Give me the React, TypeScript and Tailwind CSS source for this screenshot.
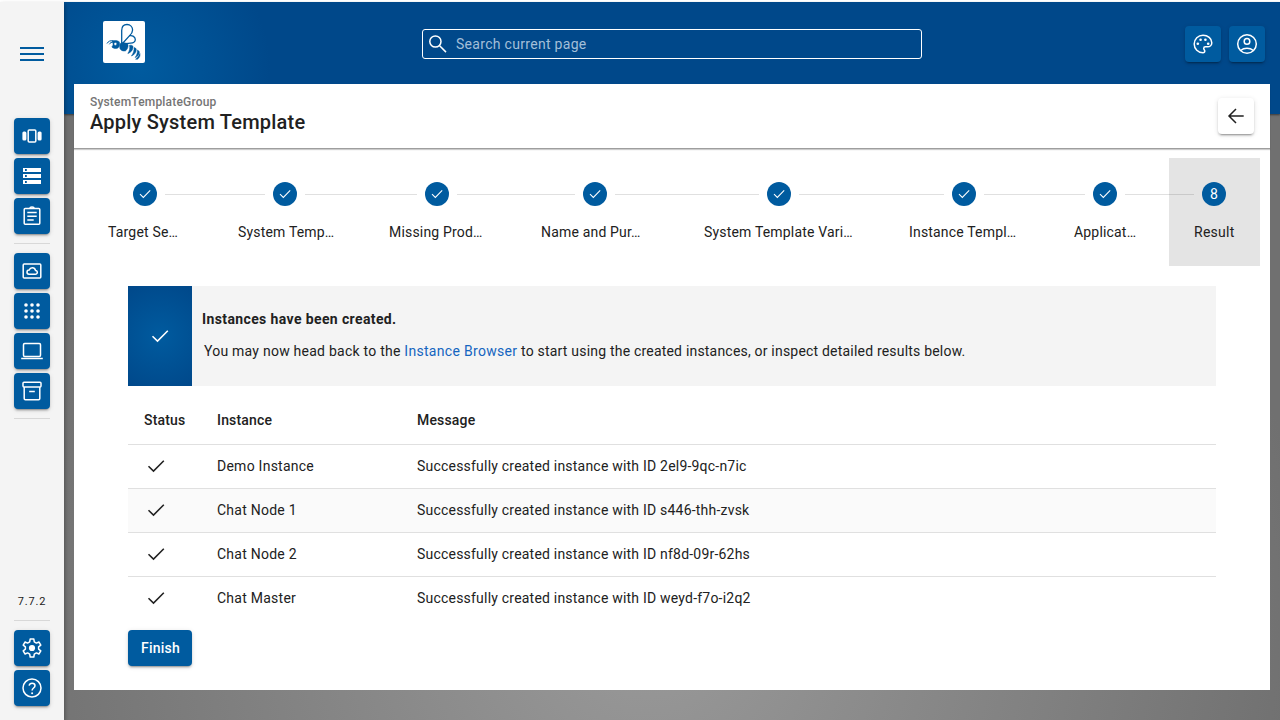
import type { ReactNode } from "react";

const steps = [
  { label: "Target Se…", w: "w-[122px]", pad: "pl-6" },
  { label: "System Temp…", w: "w-[158px]", pad: "pl-8" },
  { label: "Missing Prod…", w: "w-[146px]", pad: "pl-[25px]" },
  { label: "Name and Pur…", w: "w-[170px]", pad: "pl-[31px]" },
  { label: "System Template Vari…", w: "w-[198px]", pad: "pl-6" },
  { label: "Instance Templ…", w: "w-[172px]", pad: "pl-[31px]" },
  { label: "Applicat…", w: "w-[110px]", pad: "pl-6" },
];

const rows = [
  ["Demo Instance", "2el9-9qc-n7ic"],
  ["Chat Node 1", "s446-thh-zvsk"],
  ["Chat Node 2", "nf8d-09r-62hs"],
  ["Chat Master", "weyd-f7o-i2q2"],
];

function Check({ className }: { className: string }) {
  return (
    <svg viewBox="0 0 24 24" fill="none" stroke="currentColor" strokeWidth="1.55" className={className}>
      <path d="M4.5 12.2 9.5 17.1 19.8 6.7" />
    </svg>
  );
}

function Outline({ children }: { children: ReactNode }) {
  return (
    <svg viewBox="0 0 24 24" className="size-6" fill="none" stroke="currentColor" strokeWidth="1.5">
      {children}
    </svg>
  );
}

function IconButton({ children, white }: { children: ReactNode; white?: boolean }) {
  return (
    <button
      className={
        "flex size-9 shrink-0 items-center justify-center rounded shadow-[0_3px_1px_-2px_rgba(0,0,0,0.2),0_2px_2px_0_rgba(0,0,0,0.14),0_1px_5px_0_rgba(0,0,0,0.12)] " +
        (white ? "bg-white text-[#212121]" : "bg-[#005b9f] text-white")
      }
    >
      {children}
    </button>
  );
}

function Bee() {
  return (
    <svg viewBox="0 0 42 42" className="size-[42px] rounded-[2px] bg-white" fill="#005b9f">
      <g fill="none" stroke="#005b9f" strokeWidth="1.3">
        <path d="M18.700 23V9.500C18.700 5.500 20.700 3.500 24 3.500c3.300 0 5.600 2.400 5.600 5.500 0 2.200-1 3.700-3 5.600L19.500 22.500" />
        <path d="M26.200 14.700c3.300-.7 6.100 1.100 6.100 3.900 0 2.600-1.800 3.500-4.800 3.500l-7 .8" />
        <path d="M4 22.500c1.300-2.200 3.200-3.300 6.500-2.600M6.300 23.300c.8-1.500 2.200-2.300 4-2.200" strokeWidth="1" />
      </g>
      <g stroke="#005b9f" strokeWidth="0.5" strokeLinejoin="round">
        <path
          fillRule="evenodd"
          d="M9 20c2.500-.9 5.300-.6 7.200.7 1 2.200.6 4.600-1.200 6.200-2.200 1-4.800.7-6.200-.9 1.600-1.500 1.700-4 .2-6Zm3.300 1.400a1.500 1.500 0 1 0 .1 3 1.500 1.500 0 0 0-.1-3Z"
        />
        <path d="M17.500 22.300c2-.9 5.600-.7 7.300.8.900 2.200-.2 5.500-2.400 6.800-2.200.5-4.800-.5-5.500-2.500-.3-1.700-.2-3.600.6-5.100Z" />
        <path d="M26.500 24.300c1.400-.4 2.900.1 3.600 1.100.1 3.200-2.100 6.300-5.300 7.100 1.800-2.600 2.300-5.300 1.700-8.200Z" />
        <path d="M31.100 26.500c1 .1 1.900.8 2.200 1.800 0 2.900-1.900 5.800-4.900 6.700 2-2.600 2.800-5.400 2.700-8.500Z" />
        <path d="M34.400 29c1.200.5 1.900 1.300 2 2.300-.2 2.300-1.700 4.300-4.300 5.300 1.700-2.300 2.500-4.800 2.300-7.600Z" />
        <path d="M36.900 32.500c.5 2.100-.3 4.100-2.400 5.700h-1.900c2-1.700 3.400-3.500 4.300-5.700Z" />
      </g>
    </svg>
  );
}

function Sidebar() {
  return (
    <aside className="z-10 mt-0.5 flex w-16 shrink-0 flex-col items-center bg-[#f4f4f4] shadow-[1px_2px_4px_rgba(0,0,0,0.3)]">
      <button className="mt-[45px] flex h-[14px] w-6 flex-col justify-between text-[#005b9f]">
        <span className="h-[2px] w-6 bg-current" />
        <span className="h-[2px] w-6 bg-current" />
        <span className="h-[2px] w-6 bg-current" />
      </button>
      <nav className="mt-[57px] flex flex-col gap-1">
        <IconButton>
          <svg viewBox="0 0 24 24" className="size-6" fill="currentColor">
            <rect x="2.400" y="7.600" width="4" height="8.800" rx="1.500" />
            <rect x="17.600" y="7.600" width="4" height="8.800" rx="1.500" />
            <rect x="8.200" y="5.900" width="7.600" height="12.200" rx="1" fill="none" stroke="currentColor" strokeWidth="1.500" />
          </svg>
        </IconButton>
        <IconButton>
          <svg viewBox="0 0 24 24" className="size-6" fill="currentColor" fillRule="evenodd">
            <path d="M3 4h18v4H3zm2 1.100v1.800h1.800V5.100zM3 10h18v4H3zm2 1.100v1.800h1.800v-1.800zM3 16h18v4H3zm2 1.100v1.800h1.800v-1.800z" />
          </svg>
        </IconButton>
        <IconButton>
          <Outline>
            <rect x="4.200" y="4.600" width="15.600" height="15.600" rx="1" />
            <path d="M10 4.400a2 1.500 0 0 1 4 0M7.300 8.500h9.400M7.300 12.300h9.400M7.300 16h6.400" />
          </Outline>
        </IconButton>
      </nav>
      <hr className="mt-[9px] h-px w-9 border-0 bg-[#d8d8d8]" />
      <nav className="mt-[9px] flex flex-col gap-1">
        <IconButton>
          <Outline>
            <rect x="3.200" y="5" width="17.600" height="14" rx="1" />
            <path d="M9 15.200h6.300a1.900 1.900 0 0 0 .2-3.800c-.4-1.600-1.600-2.600-3.200-2.600-1.500 0-2.600.8-3.100 2.200a2.100 2.100 0 0 0-.2 4.200Z" />
          </Outline>
        </IconButton>
        <IconButton>
          <svg viewBox="0 0 24 24" className="size-6" fill="currentColor">
            {[6, 12, 18].map((y) => [6, 12, 18].map((x) => <circle key={`${x}-${y}`} cx={x} cy={y} r="1.800" />))}
          </svg>
        </IconButton>
        <IconButton>
          <Outline>
            <rect x="3.500" y="4.500" width="17" height="13" rx="1.200" />
            <path d="M1.200 19.500h21.600" />
          </Outline>
        </IconButton>
        <IconButton>
          <Outline>
            <rect x="3" y="3.200" width="18" height="4.700" rx="1" />
            <path d="M4.200 8v11.500c0 .8.400 1.200 1.200 1.200h13.200c.8 0 1.200-.4 1.200-1.200V8M9.200 12.500h5.600" />
          </Outline>
        </IconButton>
      </nav>
      <hr className="mt-[9px] h-px w-9 border-0 bg-[#d8d8d8]" />
      <div className="mt-auto text-[11px] leading-4 tracking-[0.8px]">7.7.2</div>
      <hr className="mt-[10px] h-px w-9 border-0 bg-[#d8d8d8]" />
      <div className="mt-[9px] mb-[14px] flex flex-col gap-1">
        <IconButton>
          <Outline>
            <path
              strokeLinejoin="round"
              d="M10.200 3h3.600l.5 2.900 2.100 1.200 2.500-1.100 1.900 3.200-2.200 1.700v2.200l2.200 1.700-1.900 3.200-2.500-1.100-2.100 1.200-.5 2.900h-3.600l-.5-2.900-2.100-1.200-2.500 1.100-1.900-3.200 2.200-1.700v-2.200L3.200 9.200 5.100 6l2.500 1.100 2.100-1.200z"
            />
            <circle cx="12" cy="12" r="3.100" fill="currentColor" stroke="none" />
          </Outline>
        </IconButton>
        <IconButton>
          <Outline>
            <circle cx="12" cy="12" r="9" />
            <path d="M9.100 9.600c.3-1.500 1.400-2.400 3-2.400 1.700 0 2.900 1 2.900 2.500 0 2.200-2.900 2.400-2.900 4.700" />
            <circle cx="12.100" cy="17.200" r="1" fill="currentColor" stroke="none" />
          </Outline>
        </IconButton>
      </div>
    </aside>
  );
}

function Stepper() {
  return (
    <div className="flex h-[108px]">
      {steps.map((s, i) => (
        <div key={s.label} className={`${s.w} shrink-0 pt-6`}>
          <div className="flex items-center gap-2">
            <span className={"h-px flex-1 " + (i === 0 ? "" : "bg-[#e0e0e0]")} />
            <span className="flex size-6 items-center justify-center rounded-full bg-[#005b9f] text-white">
              <Check className="size-4" />
            </span>
            <span className="h-px flex-1 bg-[#e0e0e0]" />
          </div>
          <div className={`${s.pad} mt-4 text-sm tracking-[0.18px] whitespace-nowrap`}>{s.label}</div>
        </div>
      ))}
      <div className="flex w-[9px] shrink-0 pt-9">
        <span className="h-px w-full bg-[#e0e0e0]" />
      </div>
      <div className="w-[91px] shrink-0 bg-[#e4e4e4] pt-6">
        <div className="flex items-center gap-2 pr-px">
          <span className="h-px flex-1 bg-[#c9c9c9]" />
          <span className="flex size-6 items-center justify-center rounded-full bg-[#005b9f] text-sm text-white">8</span>
          <span className="flex-1" />
        </div>
        <div className="mt-4 pl-[25px] text-sm">Result</div>
      </div>
    </div>
  );
}

export default function App() {
  return (
    <div className="flex h-[720px] w-[1280px] overflow-hidden bg-white font-[Roboto,sans-serif] tracking-[0.25px] text-[#212121]">
      <Sidebar />
      <div className="mt-0.5 grid min-w-0 flex-1 grid-cols-1 grid-rows-[112px_606px] bg-[radial-gradient(ellipse_at_48%_86%,#9a9a9a,#707070_74%)]">
        <header className="col-start-1 row-start-1 flex items-start bg-[radial-gradient(circle_at_76px_64px,#005b9f_0,#00488a_130px)] shadow-[0_1px_2px_rgba(0,0,0,0.5)]">
          <div className="mt-[19px] ml-[39px]">
            <Bee />
          </div>
          <div className="mt-[27px] ml-[277px] flex h-[30px] w-[500px] items-center rounded-[3px] border border-white pl-[3px] text-white">
            <svg viewBox="0 0 24 24" className="size-6" fill="none" stroke="currentColor" strokeWidth="1.500">
              <circle cx="9.400" cy="9.500" r="5.600" />
              <path d="m13.400 13.500 6.600 6.600" />
            </svg>
            <span className="ml-[6px] text-sm tracking-[0.3px] text-[#a3bfd9]">Search current page</span>
          </div>
          <div className="mt-6 mr-[15px] ml-auto flex gap-2">
            <IconButton>
              <Outline>
                <path d="M12 3.200a8.800 8.800 0 0 0 0 17.600c1.100 0 1.800-.7 1.800-1.700 0-.6-.3-1-.6-1.400-.3-.4-.5-.7-.5-1.200 0-1 .8-1.700 1.700-1.700h2.200c2.300 0 4.200-1.800 4.200-4.100 0-4.300-4-7.500-8.800-7.500Z" />
                <g fill="currentColor" stroke="none">
                  <circle cx="6.800" cy="11.800" r="1.300" />
                  <circle cx="9.600" cy="7.800" r="1.300" />
                  <circle cx="14.400" cy="7.800" r="1.300" />
                  <circle cx="17.200" cy="11.800" r="1.300" />
                </g>
              </Outline>
            </IconButton>
            <IconButton>
              <Outline>
                <circle cx="12" cy="12" r="9.300" />
                <circle cx="12" cy="9.400" r="2.800" />
                <path d="M5.600 18.500c3.600-3 9.200-3 12.800 0" />
              </Outline>
            </IconButton>
          </div>
        </header>
        <main className="z-10 col-start-1 row-span-2 row-start-1 mt-[82px] mr-[10px] mb-[30px] ml-[10px] flex flex-col bg-white">
          <div className="flex h-[65px] shrink-0 items-center justify-between border-b border-[#9e9e9e] px-4 shadow-[0_1px_1px_rgba(0,0,0,0.2)]">
            <div className="flex flex-col pb-1">
              <span className="text-[12px] leading-4 font-medium tracking-[0.18px] text-[#757575]">SystemTemplateGroup</span>
              <h1 className="text-[20px] leading-6 font-medium tracking-[0.22px]">Apply System Template</h1>
            </div>
            <IconButton white>
              <svg viewBox="0 0 24 24" className="size-6" fill="none" stroke="currentColor" strokeWidth="1.500">
                <path d="M19.700 12H5.300M12 5 5 12l7 7" />
              </svg>
            </IconButton>
          </div>
          <div className="mt-[9px] px-[10px]">
            <Stepper />
          </div>
          <div className="mx-[54px] mt-5 flex h-[100px] shrink-0 bg-[#f4f4f4]">
            <div className="flex w-16 items-center justify-center bg-[radial-gradient(circle,#005b9f,#00488a)] text-white">
              <Check className="size-6" />
            </div>
            <div className="pt-[23px] pl-[10px] text-sm">
              <div className="font-bold tracking-[0.38px]">Instances have been created.</div>
              <div className="mt-3 pl-0.5 tracking-[0.2px]">
                <span className="tracking-[0.24px]">You may now head back to the </span>
                <a className="tracking-[0.31px] text-[#1565c0]">Instance Browser</a> to start using the created
                instances, or inspect detailed results below.
              </div>
            </div>
          </div>
          <div className="mx-[54px] mt-[10px] h-[224px] shrink-0 overflow-hidden text-sm">
            <div className="flex h-[49px] items-center border-b border-[#e0e0e0] pl-4 font-medium tracking-[0.18px]">
              <span className="w-[73px]">Status</span>
              <span className="w-[200px]">Instance</span>
              <span>Message</span>
            </div>
            {rows.map(([name, id], i) => (
              <div
                key={name}
                className={"flex h-11 items-center border-b border-[#e0e0e0] pb-px pl-4 " + (i === 1 ? "bg-[#fafafa]" : "")}
              >
                <span className="w-[73px]">
                  <Check className="size-6" />
                </span>
                <span className="w-[200px]">{name}</span>
                <span className="tracking-[0.21px]">Successfully created instance with ID {id}</span>
              </div>
            ))}
          </div>
          <button className="mt-[10px] ml-[54px] h-9 w-16 shrink-0 rounded bg-[#005b9f] pl-px text-sm font-medium text-white shadow-[0_3px_1px_-2px_rgba(0,0,0,0.2),0_2px_2px_0_rgba(0,0,0,0.14),0_1px_5px_0_rgba(0,0,0,0.12)]">
            Finish
          </button>
        </main>
      </div>
    </div>
  );
}
